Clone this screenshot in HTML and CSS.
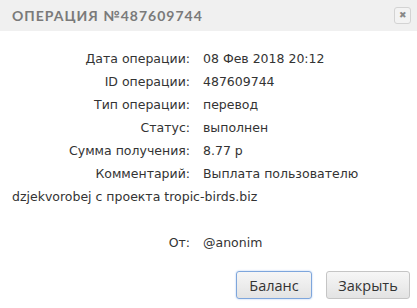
FILE: index.html
```
<!DOCTYPE html>
<html lang="ru">

<head>
  <meta charset="UTF-8">
  <title>Операция №487609744</title>
  <link rel="stylesheet" href="styles.css">
</head>

<body>
  <div class="dialog">
    <div class="titlebar">
      <span class="title">Операция №487609744</span>
      <button class="close" title="Закрыть">&#10006;</button>
    </div>

    <div class="content">
      <div class="row"><span class="label">Дата операции:</span>08 Фев 2018 20:12</div>
      <div class="row"><span class="label">ID операции:</span>487609744</div>
      <div class="row"><span class="label">Тип операции:</span>перевод</div>
      <div class="row"><span class="label">Статус:</span>выполнен</div>
      <div class="row"><span class="label">Сумма получения:</span>8.77 р</div>
      <div class="row"><span class="label">Комментарий:</span>Выплата пользователю</div>
      <div class="row">dzjekvorobej с проекта tropic-birds.biz</div>
      <div class="row empty"></div>
      <div class="row"><span class="label">От:</span>@anonim</div>
    </div>

    <div class="buttons">
      <button class="btn focused balance">Баланс</button>
      <button class="btn close-btn">Закрыть</button>
    </div>
  </div>
</body>

</html>
```

FILE: styles.css
```
body {
  margin: 0;
  background-color: #fff;
  font-family: 'DejaVu Sans', sans-serif;
  color: #333;
}

.dialog {
  width: 417px;
  height: 308px;
  display: flex;
  flex-direction: column;
}

.titlebar {
  height: 31px;
  background-color: #f0f0f0;
  display: flex;
  align-items: center;
  justify-content: space-between;
  padding: 0 6px 0 12px;
}

.title {
  font-family: 'Lato', sans-serif;
  font-weight: bold;
  font-size: 14px;
  letter-spacing: 1px;
  text-transform: uppercase;
  color: #7a7a7a;
}

.close {
  width: 17px;
  height: 17px;
  padding: 0;
  border: 1px solid #d3d3d3;
  border-radius: 3px;
  background-color: #f3f3f3;
  color: #888;
  font-size: 9px;
  line-height: 15px;
  cursor: pointer;
}

.content {
  padding: 16px 12px 0 12px;
  font-size: 12.5px;
  line-height: 23px;
}

.row.empty {
  height: 23px;
}

.label {
  display: inline-block;
  width: 178px;
  margin-right: 13px;
  text-align: right;
}

.buttons {
  display: flex;
  justify-content: flex-end;
  gap: 14px;
  padding: 0 7px 0 0;
  margin-top: 17px;
}

.btn {
  height: 28px;
  padding: 0;
  font-family: 'Open Sans', sans-serif;
  font-size: 14.5px;
  color: #333;
  background: linear-gradient(#f6f6f6, #e3e3e3);
  border: 1px solid #c5c5c5;
  border-radius: 3px;
  cursor: pointer;
}

.balance {
  width: 76px;
}

.close-btn {
  width: 84px;
}

.btn.focused {
  border-color: #7ea6dc;
  box-shadow: 0 0 2px #a8c6ef;
}
```
